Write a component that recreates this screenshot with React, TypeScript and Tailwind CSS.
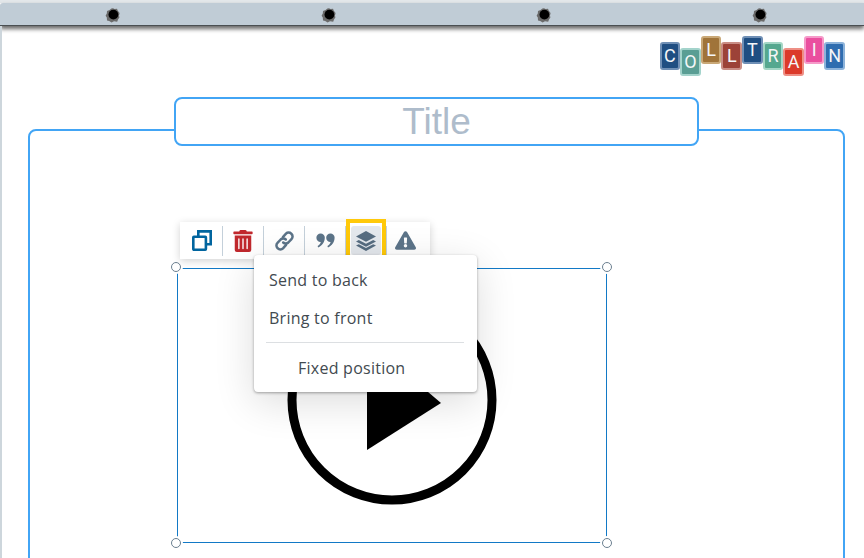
import React from 'react';
import { FaTrashAlt, FaExclamationTriangle } from 'react-icons/fa';

const holes = [0, 1, 2, 3];

const tiles = [
  { letter: 'C', cls: 'mt-[6px] bg-[#1f4e82] border-[#6f8fb5]' },
  { letter: 'O', cls: 'mt-[12px] bg-[#5a9e94] border-[#a3d3cb]' },
  { letter: 'L', cls: 'mt-0 bg-[#a0743a] border-[#c9a877]' },
  { letter: 'L', cls: 'mt-[6px] bg-[#9c4238] border-[#c98d85]' },
  { letter: 'T', cls: 'mt-0 bg-[#1f4e82] border-[#6f8fb5]' },
  { letter: 'R', cls: 'mt-[6px] bg-[#55a88f] border-[#a3d6c5]' },
  { letter: 'A', cls: 'mt-[12px] bg-[#db3a2a] border-[#ee8f85]' },
  { letter: 'I', cls: 'mt-0 bg-[#ea4f9f] border-[#f59ac9]' },
  { letter: 'N', cls: 'mt-[6px] bg-[#2f6db0] border-[#8db3da]' },
];

function Hole() {
  return (
    <svg width="16" height="16" viewBox="0 0 16 16" className="mt-[2px] block">
      <path
        d="M8 1.2 9.6 2 12 1.8 12.8 3.8 14.6 6 14 8.4 14.4 10.6 13 12.4 12.2 14.8 9 14.2 6.6 15.4 4.2 14 2 13.4 1.8 10.4.6 8.8 1.8 6.6 2 4 4.6 3 6.4 1.6Z"
        fill="#6a6a6a"
      />
      <circle cx="8.4" cy="7.6" r="4.9" fill="#000" />
    </svg>
  );
}

function CloneIcon() {
  return (
    <svg width="20" height="21" viewBox="0 0 20 21" fill="none" stroke="#01659f" strokeWidth="2.6">
      <rect x="1.3" y="6.8" width="12.6" height="12.9" rx="0.6" />
      <path d="M6.3 6.6V1.4H18.7V14.2H14" />
    </svg>
  );
}

function LinkIcon() {
  return (
    <svg width="21" height="22" viewBox="0 0 21 22" fill="none" stroke="#5c7489" strokeWidth="2.5" strokeLinecap="round">
      <path d="M8.9 7.1 12 3.7a3.6 3.6 0 0 1 5.2 0l.3.3a3.6 3.6 0 0 1 0 5.1l-3.2 3.4a3.6 3.6 0 0 1-5.1 0" />
      <path d="M12.1 14.9 9 18.3a3.6 3.6 0 0 1-5.2 0l-.3-.3a3.6 3.6 0 0 1 0-5.1l3.2-3.4a3.6 3.6 0 0 1 5.1 0" />
    </svg>
  );
}

function QuoteIcon() {
  return (
    <svg width="19" height="15" viewBox="0 0 19 15" fill="#5c7489">
      <path d="M.4 4.6a4.2 4.2 0 0 1 8.4 0c0 4.6-2.6 8.3-6.6 9.8l-.6-1.3c1.7-.9 2.8-2.2 3.2-4A4.2 4.2 0 0 1 .4 4.6Z" />
      <path d="M10.2 4.6a4.2 4.2 0 0 1 8.4 0c0 4.6-2.6 8.3-6.6 9.8l-.6-1.3c1.7-.9 2.8-2.2 3.2-4a4.2 4.2 0 0 1-4.4-4.5Z" />
    </svg>
  );
}

function LayersIcon() {
  return (
    <svg width="20" height="20" viewBox="0 0 20 20" fill="#566c80">
      <path d="M10 0 20 5.4 10 10.8 0 5.4Z" />
      <path d="M2.8 9 10 12.8 17.2 9 20 10.4 10 15.8 0 10.4Z" />
      <path d="M2.8 13.2 10 17 17.2 13.2 20 14.6 10 20 0 14.6Z" />
    </svg>
  );
}

function ToolButton({ children, divider = true }: { children: React.ReactNode; divider?: boolean }) {
  return (
    <div className={`flex h-[30px] w-[41px] items-center justify-center ${divider ? 'border-r border-[#c4d0da]' : ''}`}>
      {children}
    </div>
  );
}

function Handle({ className }: { className: string }) {
  return (
    <div
      className={`absolute h-[10px] w-[10px] rounded-full border border-[#6b7f90] bg-white shadow-[0_0_0_2px_#fff] ${className}`}
    />
  );
}

export default function App() {
  return (
    <div className="relative h-[558px] w-[864px] overflow-hidden bg-white font-['Liberation_Sans',sans-serif]">
      {/* binder strip */}
      <div className="h-[3px] bg-[#e3e7ea]" />
      <div className="flex h-[23px] items-center justify-between rounded-tl-[3px] border-b border-[#4a4f52] bg-[#c0ccd6] pl-[105px] pr-[96px] shadow-[0_3px_4px_rgba(0,0,0,0.6)]">
        {holes.map((h) => (
          <Hole key={h} />
        ))}
      </div>
      <div className="absolute bottom-0 left-0 top-[26px] w-[2px] bg-[#cdd6dc]" />

      {/* logo */}
      <div className="mr-[19px] mt-[10px] flex justify-end">
        {tiles.map((t, i) => (
          <div
            key={i}
            className={`flex h-[28px] w-[20.6px] items-center justify-center rounded-[3px] border-2 font-['Roboto',sans-serif] text-[18px] font-normal leading-none text-[#f4f6f8] ${t.cls}`}
          >
            {t.letter}
          </div>
        ))}
      </div>

      {/* slide frame */}
      <div className="absolute left-[28px] top-[129px] h-[460px] w-[817px] rounded-[8px] border-2 border-[#42a5f5]" />
      <div className="absolute left-[174px] top-[97px] flex h-[49px] w-[525px] items-center justify-center rounded-[8px] border-2 border-[#42a5f5] bg-white text-[37px] leading-none text-[#aebccb]">
        Title
      </div>

      {/* selected element */}
      <div className="absolute left-[177px] top-[268px] h-[275px] w-[430px] border border-[#1279c6]">
        <svg width="216" height="216" viewBox="0 0 216 216" className="absolute left-[106px] top-[23px]">
          <circle cx="108" cy="108" r="100" fill="none" stroke="#000" strokeWidth="9" />
          <path d="M83 48 157 111 83 158Z" fill="#000" />
        </svg>
        <Handle className="-left-[7px] -top-[7px]" />
        <Handle className="-right-[6px] -top-[7px]" />
        <Handle className="-bottom-[6px] -left-[7px]" />
        <Handle className="-bottom-[6px] -right-[6px]" />
      </div>

      {/* toolbar */}
      <div className="absolute left-[180px] top-[222px] flex h-[37px] w-[250px] items-center bg-white pl-[2px] shadow-[0_2px_8px_rgba(0,0,0,0.18)]">
        <ToolButton>
          <CloneIcon />
        </ToolButton>
        <ToolButton>
          <FaTrashAlt className="text-[22px] text-[#c0282d]" />
        </ToolButton>
        <ToolButton>
          <LinkIcon />
        </ToolButton>
        <ToolButton>
          <QuoteIcon />
        </ToolButton>
        <ToolButton>
          <div className="flex h-[29px] w-[30px] items-center justify-center rounded-[3px] bg-[#e4e8ed]">
            <LayersIcon />
          </div>
        </ToolButton>
        <ToolButton divider={false}>
          <FaExclamationTriangle className="mr-[4px] text-[21px] text-[#5c7489]" />
        </ToolButton>
      </div>
      <div className="absolute left-[346px] top-[219px] h-[41px] w-[40px] border-4 border-[#ffc90a]" />

      {/* layer menu */}
      <div className="absolute left-[254px] top-[255px] h-[137px] w-[223px] rounded-[4px] bg-white font-['Open_Sans',sans-serif] text-[16px] tracking-[0.25px] text-[#424a50] shadow-[0_1px_3px_rgba(0,0,0,0.35),0_10px_40px_rgba(0,0,0,0.14)]">
        <div className="flex h-[38px] items-center pl-[15px] pt-[12px]">Send to back</div>
        <div className="flex h-[38px] items-center pl-[15px] pt-[12px]">Bring to front</div>
        <div className="ml-[12px] mr-[13px] mt-[11px] border-t border-[#dcdfe2]" />
        <div className="flex h-[40px] items-center pl-[44px] pt-[10px]">Fixed position</div>
      </div>
    </div>
  );
}
